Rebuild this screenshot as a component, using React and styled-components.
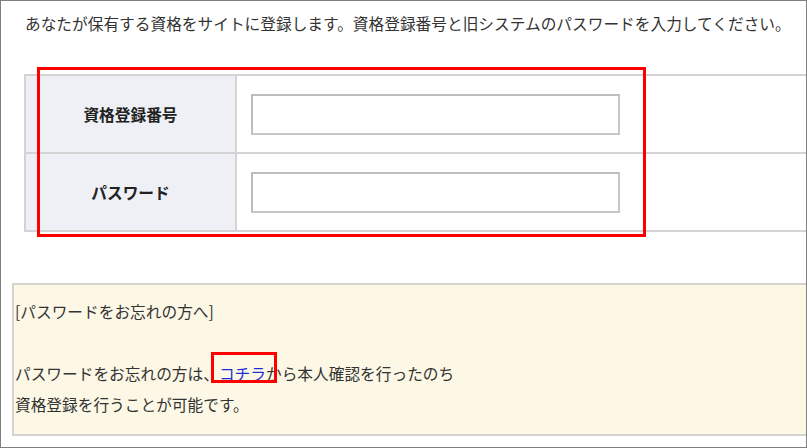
import React from "react";
import styled, { createGlobalStyle } from "styled-components";

const Global = createGlobalStyle`
  html, body { margin: 0; padding: 0; background: #fff; }
  body { font-family: "Noto Sans CJK JP", "Noto Sans", sans-serif; }
`;

const Frame = styled.div`
  position: relative;
  box-sizing: border-box;
  width: 807px;
  height: 448px;
  border: 1px solid #7f7f7f;
  background: #fff;
  overflow: hidden;
  padding-top: 7px;
  color: #333;
  font-size: 15.7px;
`;

const Intro = styled.p`
  margin: 0;
  padding-left: 24px;
  line-height: 31px;
  white-space: nowrap;
`;

const Table = styled.div`
  margin: 35px -20px 0 23px;
  border-top: 2px solid #d4d4d4;
  border-left: 2px solid #d4d4d4;
`;

const Row = styled.div`
  display: grid;
  grid-template-columns: 211px 1fr;
  height: 76px;
  border-bottom: 2px solid #d4d4d4;
`;

const Label = styled.div`
  display: flex;
  align-items: center;
  justify-content: center;
  background: #eef0f5;
  border-right: 2px solid #d4d4d4;
  font-weight: bold;
  color: #222;
`;

const Field = styled.div`
  display: flex;
  align-items: center;
  padding-left: 14px;
`;

const Input = styled.input`
  box-sizing: border-box;
  width: 369px;
  height: 41px;
  border: 2px solid #c6c6c6;
  border-top-color: #bdbdbd;
  border-left-color: #bdbdbd;
  background: #fff;
  margin: 0;
  padding: 0 6px;
  font: inherit;
  outline: none;
`;

const Notice = styled.div`
  margin: 51px -20px 0 11px;
  border: 2px solid #d5d3cb;
  background: #fdf8e6;
  padding: 11px 0 14px 1px;
  line-height: 31px;
  white-space: nowrap;
`;

const Link = styled.a`
  color: #1f2fd6;
  text-decoration: underline;
`;

const Mark = styled.div`
  position: absolute;
  box-sizing: border-box;
  border: 3px solid #ff0000;
  pointer-events: none;
`;

export default function App() {
  return (
    <>
      <Global />
      <Frame>
        <Intro>
          あなたが保有する資格をサイトに登録します。資格登録番号と旧システムのパスワードを入力してください。
        </Intro>
        <Table>
          <Row>
            <Label>資格登録番号</Label>
            <Field>
              <Input type="text" />
            </Field>
          </Row>
          <Row>
            <Label>パスワード</Label>
            <Field>
              <Input type="password" />
            </Field>
          </Row>
        </Table>
        <Notice>
          [パスワードをお忘れの方へ]
          <br />
          <br />
          パスワードをお忘れの方は、<Link href="#">コチラ</Link>から本人確認を行ったのち
          <br />
          資格登録を行うことが可能です。
        </Notice>
        <Mark style={{ left: 36, top: 66, width: 609, height: 170 }} />
        <Mark style={{ left: 210, top: 351, width: 66, height: 31 }} />
      </Frame>
    </>
  );
}
